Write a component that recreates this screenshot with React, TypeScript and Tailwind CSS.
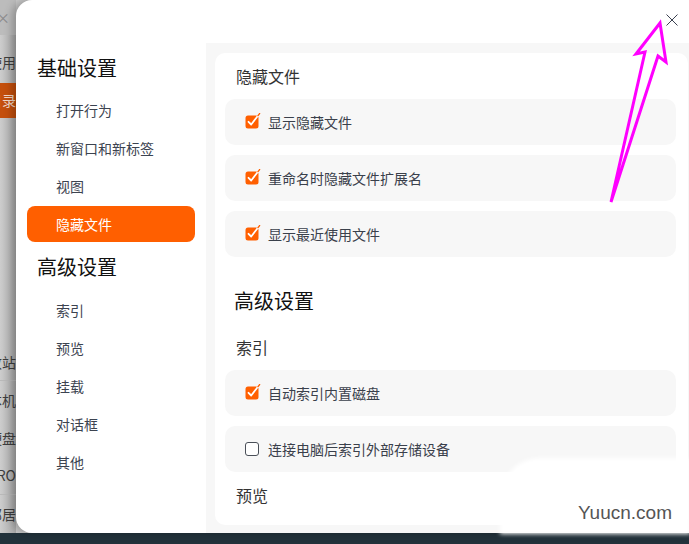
import React from "react";

const font = { fontFamily: '"Noto Sans CJK SC", "Noto Sans", sans-serif' };

function CheckBox({ checked }: { checked: boolean }) {
  if (!checked) {
    return <div className="w-[14px] h-[14px] rounded-[3px] border-[1.5px] border-[#4a4f58] bg-white shrink-0" />;
  }
  return (
    <svg width="16" height="16" viewBox="0 0 16 16" className="shrink-0 -mt-[2px]">
      <rect x="0.5" y="2.5" width="13" height="13" rx="2.5" fill="#ff5f00" />
      <path d="M3.5 8.8 L6.2 11.5 L13.5 2" stroke="#fff" strokeWidth="1.8" fill="none" strokeLinecap="round" strokeLinejoin="round" />
      <path d="M13 2.6 L14.6 0.6" stroke="#ff5f00" strokeWidth="1.4" strokeLinecap="round" />
    </svg>
  );
}

function Row({ checked, label }: { checked: boolean; label: string }) {
  return (
    <div className="h-[46px] rounded-[10px] bg-[#f7f7f7] flex items-center pl-[20px] gap-[7px]">
      <CheckBox checked={checked} />
      <span className={"text-[14px] leading-[20px] text-[#3a404b] " + (checked ? "" : "ml-[2px]")}>{label}</span>
    </div>
  );
}

function SideItem({ label, active }: { label: string; active?: boolean }) {
  return (
    <div className="py-[1px]">
      <div
        className={
          "h-[36px] rounded-[8px] flex items-center pl-[29px] text-[14px] leading-[20px] " +
          (active ? "bg-[#ff5f00] text-white" : "text-[#3c4350]")
        }
      >
        {label}
      </div>
    </div>
  );
}

function StripText({ text, h, orange, line, pt }: { text: string; h: number; orange?: boolean; line?: boolean; pt?: number }) {
  return (
    <div
      className={
        "flex items-center justify-end overflow-hidden whitespace-nowrap text-[14px] " +
        (orange ? "bg-[#c44f0c] text-[#f3d9c8] " : "text-[#3d3d3d] ") +
        (line ? "border-b border-[#b9b9b9]" : "")
      }
      style={{ height: h, paddingTop: pt ?? 0 }}
    >
      <span>{text}</span>
    </div>
  );
}

export default function App() {
  return (
    <div className="relative w-[689px] h-[544px] overflow-hidden bg-[#22323b]" style={font}>
      <div className="flex h-[533px] bg-[#c9c9c9]">
        {/* background window strip */}
        <div className="w-[16px] shrink-0 flex flex-col overflow-hidden bg-gradient-to-r from-[#cdcdcd] to-[#a9a9a9]">
          <div className="h-[35px] bg-[#bcbcbc] flex items-center justify-end overflow-hidden text-[#8a8a8a] text-[14px] pr-[6px]">×</div>
          <StripText text="常使用" h={48} pt={8} />
          <StripText text="目录" h={35} orange />
          <div className="h-[228px]" />
          <StripText text="回收站" h={36} line />
          <StripText text="本机" h={38} />
          <StripText text="硬盘" h={38} />
          <StripText text="PRO" h={38} line />
          <StripText text="部居" h={38} />
        </div>

        {/* dialog */}
        <div className="flex-1 flex bg-white rounded-l-[16px] shadow-[-4px_0_8px_rgba(0,0,0,0.25)] overflow-hidden">
          {/* sidebar */}
          <div className="w-[190px] shrink-0 px-[11px] pt-[54px]">
            <div className="pl-[10px] h-[28px] leading-[28px] text-[20px] text-[#111] mb-[9px]">基础设置</div>
            <SideItem label="打开行为" />
            <SideItem label="新窗口和新标签" />
            <SideItem label="视图" />
            <SideItem label="隐藏文件" active />
            <div className="pl-[10px] h-[28px] leading-[28px] text-[20px] text-[#111] mt-[10px] mb-[10px]">高级设置</div>
            <SideItem label="索引" />
            <SideItem label="预览" />
            <SideItem label="挂载" />
            <SideItem label="对话框" />
            <SideItem label="其他" />
          </div>

          {/* right */}
          <div className="flex-1 flex flex-col min-w-0">
            <div className="h-[43px] shrink-0 flex justify-end items-start pt-[14px] pr-[11px]">
              <svg width="12" height="12" viewBox="0 0 12 12">
                <path d="M0.5 0.5 L11.5 11.5 M11.5 0.5 L0.5 11.5" stroke="#3b4150" strokeWidth="1" />
              </svg>
            </div>
            <div className="flex-1 bg-[#f7f7f7] pl-[9px] pr-[1px] pt-[10px] pb-[8px] flex">
              <div className="flex-1 bg-white rounded-[10px] pl-[10px] pr-[12px] pt-[11px] overflow-hidden">
                <div className="pl-[11px] text-[16px] leading-[24px] text-[#333]">隐藏文件</div>
                <div className="mt-[11px] flex flex-col gap-[10px]">
                  <Row checked label="显示隐藏文件" />
                  <Row checked label="重命名时隐藏文件扩展名" />
                  <Row checked label="显示最近使用文件" />
                </div>
                <div className="mt-[30px] pl-[9px] text-[20px] leading-[28px] text-[#111]">高级设置</div>
                <div className="mt-[20px] pl-[11px] text-[16px] leading-[24px] text-[#333]">索引</div>
                <div className="mt-[11px] flex flex-col gap-[10px]">
                  <Row checked label="自动索引内置磁盘" />
                  <Row checked={false} label="连接电脑后索引外部存储设备" />
                </div>
                <div className="mt-[11px] pl-[11px] text-[16px] leading-[24px] text-[#333]">预览</div>
              </div>
            </div>
          </div>
        </div>
      </div>

      {/* watermark */}
      <div className="absolute left-[500px] top-[458px] w-[190px] h-[76px] bg-white rounded-tl-[40px] blur-[2px]" />
      <div
        className="absolute left-[578px] top-[502px] text-[19px] leading-[22px] text-[#555]"
        style={{ fontFamily: '"Liberation Sans", Arial, sans-serif' }}
      >
        Yuucn.com
      </div>

      {/* annotation arrow */}
      <svg className="absolute left-0 top-0 pointer-events-none" width="689" height="544" viewBox="0 0 689 544">
        <path
          d="M611 202 L645 52 L636 54 L660 23 L666 62 L658 56 Z"
          fill="none"
          stroke="#ff00ff"
          strokeWidth="3"
          strokeLinejoin="miter"
          strokeLinecap="round"
        />
      </svg>
    </div>
  );
}
